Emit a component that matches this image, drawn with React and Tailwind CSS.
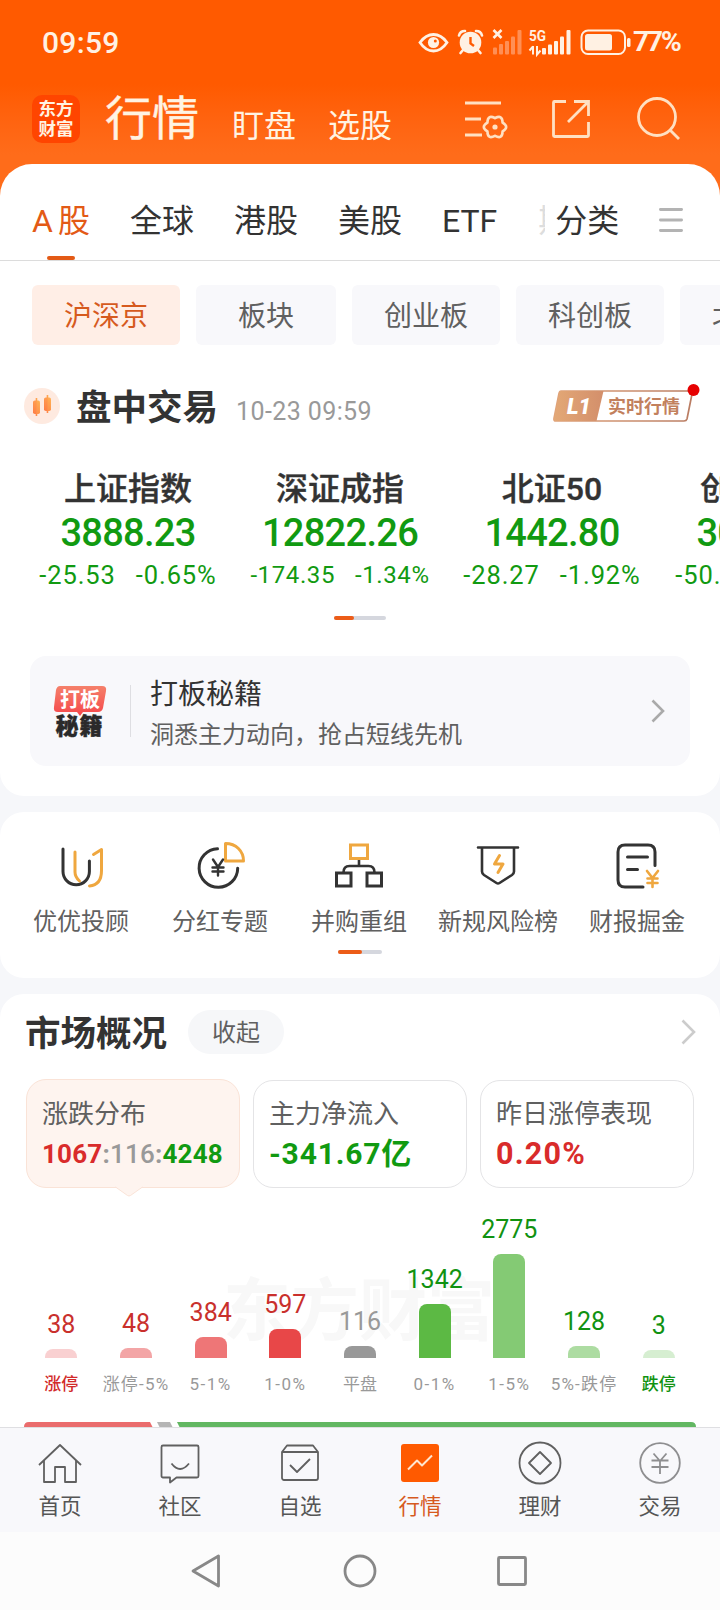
import React from "react";

const TABS = ["A 股", "全球", "港股", "美股", "ETF"];

const CHIPS = [
  { label: "沪深京", width: "w-[148px]" },
  { label: "板块", width: "w-[140px]" },
  { label: "创业板", width: "w-[148px]" },
  { label: "科创板", width: "w-[148px]" },
  { label: "北交所", width: "w-[148px]" },
];

const INDICES = [
  { name: "上证指数", value: "3888.23", diff: "-25.53", pct: "-0.65%" },
  { name: "深证成指", value: "12822.26", diff: "-174.35", pct: "-1.34%", small: true },
  { name: "北证50", value: "1442.80", diff: "-28.27", pct: "-1.92%" },
  { name: "创业板指", value: "3009.36", diff: "-50.12", pct: "-1.64%" },
];

const BARS = [
  { label: "涨停", count: 38, height: 9, bar: "bg-[#f9d0d1]", text: "text-[#c9302c]", labelText: "text-[#d22a2a] font-medium" },
  { label: "涨停-5%", count: 48, height: 10, bar: "bg-[#f3a5a6]", text: "text-[#c9302c]", labelText: "text-[#999] tracking-[1.200px]" },
  { label: "5-1%", count: 384, height: 21, bar: "bg-[#ee7677]", text: "text-[#c9302c]", labelText: "text-[#999] tracking-[1.500px]" },
  { label: "1-0%", count: 597, height: 29, bar: "bg-[#e84748]", text: "text-[#c9302c]", labelText: "text-[#999] tracking-[1.500px]" },
  { label: "平盘", count: 116, height: 12, bar: "bg-[#999]", text: "text-[#999]", labelText: "text-[#999]" },
  { label: "0-1%", count: 1342, height: 54, bar: "bg-[#5cb944]", text: "text-[#119211]", labelText: "text-[#999] tracking-[1.500px]" },
  { label: "1-5%", count: 2775, height: 104, bar: "bg-[#84ca74]", text: "text-[#119211]", labelText: "text-[#999] tracking-[1.500px]" },
  { label: "5%-跌停", count: 128, height: 12, bar: "bg-[#addca2]", text: "text-[#119211]", labelText: "text-[#999] tracking-[1.200px]" },
  { label: "跌停", count: 3, height: 8, bar: "bg-[#d6eed1]", text: "text-[#119211]", labelText: "text-[#119211] font-medium" },
];

function StatusIcons() {
  return (
    <svg width="214" height="32" viewBox="418 26 214 32" fill="none">
      {/* eye */}
      <path d="M420 42.500C424 37 428.500 34.500 433.500 34.500S443 37 447 42.500C443 48.500 438.500 51 433.500 51S424 48.500 420 42.500Z" stroke="#fff1e3" strokeWidth="2.800" />
      <circle cx="433.500" cy="42.500" r="5.600" fill="#fff1e3" />
      <circle cx="435.300" cy="41" r="1.500" fill="#ff5a00" />
      {/* alarm */}
      <circle cx="470.500" cy="42.500" r="10.800" fill="#fff1e3" />
      <path d="M459 35.500a6 6 0 0 1 6-4.500M482 35.500a6 6 0 0 0-6-4.500M463 50l-2.500 3M478 50l2.500 3" stroke="#fff1e3" strokeWidth="2.600" strokeLinecap="round" />
      <path d="M470.500 37v6.500l3.500 2.500" stroke="#ff5a00" strokeWidth="2.400" />
      {/* no signal */}
      <path d="M493.500 30l8 8M501.500 30l-8 8" stroke="#fff1e3" strokeWidth="2.600" />
      <g fill="#ff8f55">
        <rect x="493" y="47.500" width="4" height="7" rx="1" />
        <rect x="499" y="44" width="4" height="10.500" rx="1" />
        <rect x="505" y="41" width="4" height="13.500" rx="1" />
        <rect x="511" y="36.500" width="4" height="18" rx="1" />
        <rect x="517.500" y="30" width="4" height="24.500" rx="1" />
      </g>
      {/* 5G signal */}
      <text x="529" y="41" fontSize="15" fontWeight="700" fill="#fff1e3" textLength="17" lengthAdjust="spacingAndGlyphs">5G</text>
      <path d="M533 46v8.500M529.500 50.500l3.500-4M537 46v8.500l3.500-4" stroke="#fff1e3" strokeWidth="2" />
      <g fill="#fff1e3">
        <rect x="542" y="48" width="4" height="6.500" rx="1" />
        <rect x="548" y="44.500" width="4" height="10" rx="1" />
        <rect x="554" y="41" width="4" height="13.500" rx="1" />
        <rect x="560" y="36.500" width="4" height="18" rx="1" />
        <rect x="566.500" y="30" width="4" height="24.500" rx="1" />
      </g>
      {/* battery */}
      <rect x="581.500" y="30.500" width="43.500" height="23.500" rx="6.500" stroke="#fff1e3" strokeWidth="2" />
      <rect x="585" y="34" width="27" height="16.500" rx="2.500" fill="#fff1e3" />
      <rect x="627" y="38" width="3.500" height="9" rx="1.500" fill="#fff1e3" />
    </svg>
  );
}

function Header() {
  return (
    <header className="h-[220px] flex flex-col bg-linear-to-b from-[#ff5a00] from-[84px] via-[#ff6c1a] via-[155px] to-[#ff6c1a] to-[220px]">
      <div className="h-[84px] pl-[42px] pr-[39px] flex items-center justify-between text-[#fff1e3]">
        <span className="mt-px text-[30px] leading-none font-medium tracking-[0.300px]">09:59</span>
        <div className="flex items-center">
          <StatusIcons />
          <span className="mt-px w-[49px] pl-px text-[28.500px] leading-none font-bold tracking-[-2.500px] whitespace-nowrap">77%</span>
        </div>
      </div>
      <div className="flex pl-8 text-[#fff3e2]">
        <div className="mt-[11px] w-12 h-12 rounded-[10px] bg-[#ff4500] flex flex-col items-center justify-center text-[17.500px] leading-[20px] font-bold">
          <span>东方</span>
          <span>财富</span>
        </div>
        <div className="ml-[25px] mt-[7px] text-[47px] leading-[56px] [-webkit-text-stroke:0.400px_#fff3e2]">行情</div>
        <div className="ml-[33px] mt-[24px] text-[32px] leading-[36px]">盯盘</div>
        <div className="ml-[32px] mt-[24px] text-[32px] leading-[36px]">选股</div>
        <svg className="ml-[71px] mt-[8px]" width="220" height="50" viewBox="464 92 220 50" fill="none" stroke="#ffe0c2" strokeWidth="2.800">
          <path d="M466 103h36M466 119h16M466 135h17" />
          <path
            d="M503.600 131.400Q503.400 139.800 496 135.800Q488.600 139.800 488.400 131.400Q481.200 127 488.400 122.600Q488.600 114.200 496 118.200Q503.400 114.200 503.600 122.600Q510.800 127 503.600 131.400Z"
            strokeWidth="2.600"
          />
          <circle cx="496" cy="127" r="2.600" fill="#ffe0c2" stroke="none" />
          <path d="M567 101.500h-11.500a1 1 0 0 0-1 1v33a1 1 0 0 0 1 1h33a1 1 0 0 0 1-1V122M575 101.500h14.500V116M589 102l-20 20" />
          <circle cx="658" cy="117" r="18.500" />
          <path d="M670.500 129.500l9.500 9.500" />
        </svg>
      </div>
    </header>
  );
}

function Tabs() {
  return (
    <div className="h-[97px] border-b border-[#dcdcdc] pl-8 flex text-[32px] text-[#333]">
      {TABS.map((tab, i) => (
        <div key={tab} className={i === 0 ? "mr-[40px] h-[97px] flex flex-col items-center text-[#e35a16]" : "mr-[40px]"}>
          <div className="h-24 pt-[34px] leading-[46px] whitespace-pre">
            {i === 0 ? <span className="flex gap-[5px]"><span>A</span><span>股</span></span> : tab}
          </div>
          {i === 0 && <div className="-mt-1 w-7 h-1 rounded-full bg-[#e35a16]" />}
        </div>
      ))}
      <div className="ml-px pt-[34px] w-[7px] leading-[46px] overflow-hidden text-[#ddd]">期</div>
      <div className="ml-[10px] pt-[34px] leading-[46px]">分类</div>
      <svg className="ml-[40px] mt-[43px]" width="24" height="26" viewBox="0 0 24 26" stroke="#b3b3b3" strokeWidth="2.800" strokeLinecap="round">
        <path d="M1.400 2.500h21.200M1.400 13h21.200M1.400 23.500h21.200" />
      </svg>
    </div>
  );
}

function Chips() {
  return (
    <div className="mt-6 pl-8 flex gap-4 overflow-hidden">
      {CHIPS.map((chip, i) => (
        <div
          key={chip.label}
          className={`${chip.width} h-[60px] pt-[3px] shrink-0 rounded-md flex items-center justify-center text-[28px] ${
            i === 0 ? "bg-[#ffeee6] text-[#d65a1e]" : "bg-[#f8f8fb] text-[#606060]"
          }`}
        >
          {chip.label}
        </div>
      ))}
    </div>
  );
}

function Session() {
  return (
    <div className="mt-[35px] h-[52px] pl-6 pr-[25px] flex items-center">
      <svg width="36" height="36" viewBox="0 0 36 36">
        <defs>
          <linearGradient id="candle" x1="0" y1="1" x2="1" y2="0">
            <stop offset="0" stopColor="#ff7a45" />
            <stop offset="1" stopColor="#ffb454" />
          </linearGradient>
        </defs>
        <circle cx="18" cy="18" r="18" fill="#feeae0" />
        <g fill="url(#candle)">
          <rect x="9" y="12.500" width="7" height="13.500" rx="1.800" />
          <rect x="11.700" y="10" width="1.600" height="18" />
          <rect x="20" y="9.500" width="7" height="13.500" rx="1.800" />
          <rect x="22.700" y="7" width="1.600" height="18" />
        </g>
      </svg>
      <span className="ml-4 mt-[5px] text-[35.500px] font-bold text-[#333]">盘中交易</span>
      <span className="ml-[18px] mt-[12px] text-[25px] tracking-[0.400px] text-[#999]">10-23 09:59</span>
      <svg className="ml-auto -mt-[4px] overflow-visible" width="146" height="44" viewBox="550 382 146 44">
        <defs>
          <linearGradient id="level" x1="0" x2="1">
            <stop offset="0" stopColor="#e3a876" />
            <stop offset="1" stopColor="#d38f6b" />
          </linearGradient>
          <linearGradient id="frame" x1="0" x2="1">
            <stop offset="0" stopColor="#dfa27a" />
            <stop offset="1" stopColor="#b97c62" />
          </linearGradient>
        </defs>
        <path d="M562 391H691q3 0 2 3l-5 25q-.7 2-3 2H557q-2.500 0-2-2.500l5-25q.6-2.500 2-2.500z" fill="#fff" stroke="url(#frame)" strokeWidth="1.700" />
        <path d="M562 391H604.500l-7 30H557q-2.500 0-2-2.500l5-25q.6-2.500 2-2.500z" fill="url(#level)" />
        <text x="568" y="413.500" fontSize="22" fontWeight="900" fontStyle="italic" fill="#fff">L1</text>
        <text x="609" y="412.500" fontSize="18" fontWeight="700" fill="#c2805d" textLength="72">实时行情</text>
        <circle cx="694.500" cy="390" r="6" fill="#e60000" />
      </svg>
    </div>
  );
}

function Indices() {
  return (
    <div className="mt-[36px] pl-[22px] flex overflow-hidden text-[#119a11]">
      {INDICES.map((item) => (
        <div key={item.name} className="w-[212px] shrink-0 flex flex-col items-center">
          <div className="text-[32px] leading-[42px] font-medium text-[#333] [-webkit-text-stroke:0.400px_#333]">{item.name}</div>
          <div className="mt-px text-[38px] leading-[44px] font-medium tracking-[-0.700px]">{item.value}</div>
          <div className={`leading-[40px] flex gap-[20px] ${item.small ? "text-[24px] tracking-[0.600px]" : "text-[25.500px] tracking-[0.900px]"}`}>
            <span>{item.diff}</span>
            <span>{item.pct}</span>
          </div>
        </div>
      ))}
    </div>
  );
}

function Promo() {
  return (
    <div className="mt-9 mx-[30px] h-[110px] rounded-2xl bg-[#f8f8fb] flex items-center">
      <svg className="ml-[22px]" width="56" height="54" viewBox="0 0 56 54">
        <defs>
          <linearGradient id="promo" x1="0" y1="0" x2="0" y2="1">
            <stop offset="0" stopColor="#f5806a" />
            <stop offset="1" stopColor="#f5474b" />
          </linearGradient>
        </defs>
        <path d="M8 2H50q5 0 4 5l-3 17q-1 4-5 4H31l-3 4-3-4H6q-5 0-4-5L4 6q1-4 4-4z" fill="url(#promo)" />
        <text x="8" y="22.500" fontSize="20" fontWeight="700" fill="#fff">打板</text>
        <text x="3.500" y="50" fontSize="23" fontWeight="900" fill="#2a2a2a" stroke="#2a2a2a" strokeWidth="0.400" textLength="47">秘籍</text>
      </svg>
      <div className="ml-[22px] w-px h-[52px] bg-[#dedee2]" />
      <div className="ml-[19px] pt-[6px]">
        <div className="text-[28px] leading-[41px] text-[#333]">打板秘籍</div>
        <div className="text-[24px] leading-[40px] text-[#606060]">洞悉主力动向，抢占短线先机</div>
      </div>
      <svg className="ml-auto mr-[25px]" width="14" height="24" viewBox="0 0 14 24" fill="none" stroke="#aaa" strokeWidth="2.600">
        <path d="M1.500 1.500l10.500 10.500-10.500 10.500" />
      </svg>
    </div>
  );
}

function Pager({ className = "", fill }) {
  return (
    <div className={`mx-auto h-1 rounded-full bg-[#d5d7de] ${className}`}>
      <div className={`h-1 rounded-full bg-[#ec5c18] ${fill}`} />
    </div>
  );
}

const iconProps = { width: 54, height: 54, viewBox: "0 0 54 54", fill: "none", stroke: "#333", strokeWidth: 3, strokeLinecap: "round", strokeLinejoin: "round" };

const SHORTCUTS = [
  {
    label: "优优投顾",
    icon: (
      <svg {...iconProps}>
        <path d="M9 9v22.500a13.200 13.200 0 0 0 26.400 0V21" />
        <path d="M21 12v20q0 5 4.500 9M39.500 14.500l8-5v21q0 14.500-12 15.500" stroke="#efa73f" />
      </svg>
    ),
  },
  {
    label: "分红专题",
    icon: (
      <svg {...iconProps}>
        <path d="M24.500 8.700a19.300 19.300 0 1 0 20.200 19.500" />
        <path d="M32.500 3.500v17.500h18C50.500 11 43 3.500 32.500 3.500z" stroke="#efa73f" />
        <path d="M20 19.500l5 7.500 5-7.500M25 27v8.500M19.500 27.500h11M19.500 31.500h11" strokeWidth="2.400" />
      </svg>
    ),
  },
  {
    label: "并购重组",
    icon: (
      <svg {...iconProps} strokeLinejoin="miter" strokeLinecap="butt">
        <rect x="4.500" y="33" width="14.500" height="13" />
        <rect x="35" y="33" width="14.500" height="13" />
        <path d="M27 19.500v6.500M11.500 32.500q0-6.500 6-6.500h19q6 0 6 6.500" strokeWidth="2.600" />
        <rect x="18.500" y="5" width="17" height="13.500" stroke="#efa73f" />
      </svg>
    ),
  },
  {
    label: "新规风险榜",
    icon: (
      <svg {...iconProps}>
        <path d="M7 7.500h40M11 7.500v24q0 2 2 3.500l12.500 8q1.500 1 3 0l12.500-8q2-1.500 2-3.500V7.500" strokeWidth="2.600" />
        <path d="M28.500 15.500l-5 8.500h8.500l-5 8.500" stroke="#efa73f" />
      </svg>
    ),
  },
  {
    label: "财报掘金",
    icon: (
      <svg {...iconProps}>
        <path d="M45 25.500V12q0-7-7-7H15q-7 0-7 7v28q0 7 7 7h18M17.500 17h20M17.500 29.500h10" />
        <path d="M37 31l5.500 7 5.500-7M42.500 38v9M37.500 38.500h10M37.500 43h10" stroke="#efa73f" strokeWidth="2.600" />
      </svg>
    ),
  },
];

function Shortcuts() {
  return (
    <section className="mt-4 h-[166px] rounded-[24px] bg-white pt-[28px]">
      <div className="ml-[11.500px] mr-[13.500px] grid grid-cols-5">
        {SHORTCUTS.map((s) => (
          <div key={s.label} className="flex flex-col items-center">
            {s.icon}
            <div className="mt-[8px] text-[24px] leading-[40px] text-[#606060] whitespace-nowrap">{s.label}</div>
          </div>
        ))}
      </div>
      <Pager className="mt-[8px] w-11" fill="w-6" />
    </section>
  );
}

function StatCards() {
  return (
    <div className="mt-[25px] px-[26px] flex items-start gap-[13px] text-[26px] text-[#606060]">
      <div className="relative flex-1 h-[109px] rounded-[20px] border border-[#fae3d7] bg-[#fef4ef] pl-[15px] pt-[15px]">
        <div className="leading-[38px]">涨跌分布</div>
        <div className="leading-[42px] font-bold tracking-[0.200px] text-[#999] whitespace-nowrap">
          <span className="text-[#d92b2b]">1067</span>:<span className="font-medium">116</span>:<span className="text-[#119a11]">4248</span>
        </div>
        <svg className="absolute left-[88px] -bottom-[10px]" width="28" height="11" viewBox="0 0 28 11">
          <path d="M0 0.500H28L15.500 9.500q-1.500 1-3 0L0 0.500z" fill="#fef4ef" />
          <path d="M0.500 1L12.500 9.500q1.500 1 3 0L27.500 1" fill="none" stroke="#fae3d7" />
        </svg>
      </div>
      <div className="mt-px flex-1 h-[108px] rounded-[20px] border border-[#e4e4e6] pl-[15px] pt-[14px]">
        <div className="leading-[38px]">主力净流入</div>
        <div className="text-[30px] leading-[42px] font-bold tracking-[0.800px] text-[#119a11]">-341.67亿</div>
      </div>
      <div className="mt-px flex-1 h-[108px] rounded-[20px] border border-[#e4e4e6] pl-[15px] pt-[14px]">
        <div className="leading-[38px]">昨日涨停表现</div>
        <div className="text-[30.500px] leading-[42px] font-bold tracking-[1.200px] text-[#d92b2b]">0.20%</div>
      </div>
    </div>
  );
}

function Distribution() {
  return (
    <div className="relative mt-[22px] h-[195px]">
      <div className="absolute left-[223px] top-[60px] text-[68px] leading-[84px] font-bold text-[#f8f8f8]">东方财富</div>
      <div className="relative mx-6 h-[148px] grid grid-cols-9 items-end">
        {BARS.map((b) => (
          <div key={b.label} className="flex flex-col items-center">
            <span className={`text-[25px] leading-[28px] mb-[10px] ${b.text}`}>{b.count}</span>
            <div className={`w-8 rounded-t-[8px] ${b.bar}`} style={{ height: b.height }} />
          </div>
        ))}
      </div>
      <div className="mx-6 mt-[13px] grid grid-cols-9 justify-items-center">
        {BARS.map((b) => (
          <span key={b.label} className={`text-[17px] leading-[26px] whitespace-nowrap ${b.labelText}`}>{b.label}</span>
        ))}
      </div>
    </div>
  );
}

function Market() {
  return (
    <section className="mt-4 h-[433px] rounded-t-[24px] bg-white overflow-hidden">
      <div className="pt-4 pl-[25px] pr-6 h-[60px] flex items-center">
        <h2 className="pt-1 text-[35.500px] leading-[44px] font-bold text-[#333]">市场概况</h2>
        <div className="ml-[21px] w-24 h-11 pt-0.5 rounded-full bg-[#f6f7f9] flex items-center justify-center text-[24px] text-[#606060]">收起</div>
        <svg className="ml-auto" width="15" height="26" viewBox="0 0 15 26" fill="none" stroke="#ccc" strokeWidth="2.600">
          <path d="M1.500 1.500L13 13 1.500 24.500" />
        </svg>
      </div>
      <StatCards />
      <Distribution />
      <svg className="mx-6 mt-[17px]" width="672" height="16" viewBox="0 0 672 16">
        <path d="M5 0H126l8 16H0V5q0-5 5-5z" fill="#ea6c6d" />
        <path d="M133 0h13l8 16h-13z" fill="#b5b5b5" />
        <path d="M153 0H667q5 0 5 5v11H161z" fill="#62b762" />
      </svg>
    </section>
  );
}

const navProps = { width: 46, height: 46, viewBox: "0 0 46 46", fill: "none", stroke: "#606060", strokeWidth: 1.8, strokeLinejoin: "round" };

const NAV = [
  {
    label: "首页",
    icon: (
      <svg {...navProps}>
        <path d="M2 25L23 5l21 20M7 20.500V42h11V27h10v15h11V20.500" />
      </svg>
    ),
  },
  {
    label: "社区",
    icon: (
      <svg {...navProps}>
        <path d="M6 5.500h34a1.500 1.500 0 0 1 1.500 1.500v29a1.500 1.500 0 0 1-1.500 1.500H19.500l-6.500 5V37.500H6A1.500 1.500 0 0 1 4.500 36V7A1.500 1.500 0 0 1 6 5.500z" />
        <path d="M14.500 23.500q8.500 11 17.500 0" />
      </svg>
    ),
  },
  {
    label: "自选",
    icon: (
      <svg {...navProps}>
        <path d="M5 12l5-6.500h26l5 6.500M5 12h36v26a2 2 0 0 1-2 2H7a2 2 0 0 1-2-2zM13 25l7 7 13-13" />
      </svg>
    ),
  },
  {
    label: "行情",
    active: true,
    icon: (
      <svg {...navProps}>
        <rect x="4" y="4" width="38" height="38" rx="3" fill="#ff5a00" stroke="none" />
        <path d="M11 29.500l9-9 5 5L35 15.500" stroke="#ffe6d0" strokeWidth="2" />
      </svg>
    ),
  },
  {
    label: "理财",
    icon: (
      <svg {...navProps}>
        <circle cx="23" cy="23" r="20.500" />
        <path d="M23 12l11 11-11 11-11-11z" />
      </svg>
    ),
  },
  {
    label: "交易",
    icon: (
      <svg {...navProps} stroke="#8e8e90">
        <circle cx="23" cy="23" r="19.800" />
        <path d="M16.500 13.500l6.500 7.500 6.500-7.500M23 21v13M14.500 20.500h17M14.500 27h17" />
      </svg>
    ),
  },
];

function BottomNav() {
  return (
    <nav className="h-[105px] border-t border-[#dfdfe2] bg-[#f8f8fb] grid grid-cols-6 pt-3">
      {NAV.map((item) => (
        <div key={item.label} className="flex flex-col items-center">
          {item.icon}
          <span className={`mt-[5px] text-[21.500px] leading-[32px] ${item.active ? "text-[#d65a1e]" : "text-[#555]"}`}>{item.label}</span>
        </div>
      ))}
    </nav>
  );
}

function SystemBar() {
  return (
    <div className="h-[78px] bg-[#fcfcfc] flex items-center justify-center">
      <svg width="340" height="40" viewBox="190 1551 340 40" fill="none" stroke="#888" strokeWidth="2.800" strokeLinejoin="round">
        <path d="M218.500 1556v30L193 1571z" />
        <circle cx="360" cy="1571" r="15" />
        <rect x="498.500" y="1557.500" width="27" height="27" rx="1" />
      </svg>
    </div>
  );
}

export default function App() {
  return (
    <div className="w-[720px] h-[1610px] overflow-hidden bg-[#f6f7fa] font-[Roboto,'Noto_Sans_CJK_SC',sans-serif]">
      <Header />
      <section className="relative -mt-14 h-[632px] rounded-t-[32px] rounded-b-[24px] bg-white">
        <Tabs />
        <Chips />
        <Session />
        <Indices />
        <Pager className="mt-[21px] w-[52px]" fill="w-5" />
        <Promo />
      </section>
      <Shortcuts />
      <Market />
      <BottomNav />
      <SystemBar />
    </div>
  );
}
